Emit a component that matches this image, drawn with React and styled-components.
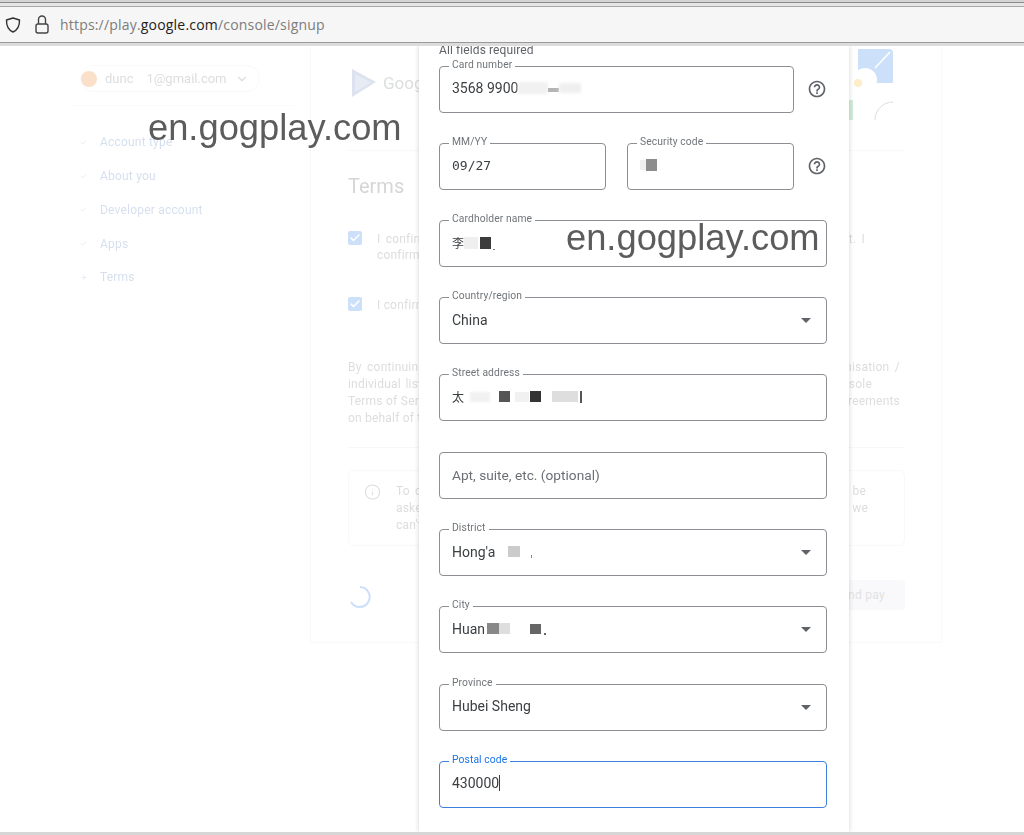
import styled, { createGlobalStyle } from "styled-components";
import { ArrowRight, Check, ChevronDown, Info } from "lucide-react";

const GlobalStyle = createGlobalStyle`
  html, body {
    margin: 0;
    height: 100%;
    background: #fff;
    font-family: Roboto, "Liberation Sans", sans-serif;
  }
  #root { height: 100%; }
`;

const Window = styled.div`
  width: 1024px;
  height: 835px;
  display: flex;
  flex-direction: column;
  overflow: hidden;
  position: relative;
`;

/* browser chrome */
const Chrome = styled.header`
  flex: none;
  height: 46px;
  box-sizing: border-box;
  background: #f6f6f6;
  border-top: 2px solid #d4d4d4;
  display: flex;
  flex-direction: column;
`;

const ChromeLine = styled.div`
  flex: none;
  height: ${(p) => p.$h}px;
  background: ${(p) => p.$c};
`;

const UrlBar = styled.div`
  flex: 1;
  display: flex;
  align-items: center;
  gap: 12px;
  padding-left: 4px;
`;

const UrlText = styled.div`
  font-family: "Open Sans", sans-serif;
  font-size: 14px;
  letter-spacing: 0.19px;
  color: #7c7c7c;
  margin-left: -2px;
  white-space: nowrap;
`;

const UrlHost = styled.span`
  color: #222;
`;

/* everything under the chrome */
const Stage = styled.main`
  flex: 1;
  position: relative;
  overflow: hidden;
  background: #fff;
`;

const Bottom = styled.div`
  flex: none;
  height: 3px;
  background: #d6d6d6;
`;

/* faded console page behind the dialog */
const Page = styled.div`
  display: grid;
  grid-template-columns: 310px 632px;
  opacity: 0.22;
  filter: blur(0.6px);
`;

const Sidebar = styled.aside`
  padding: 19px 15px 0 72px;
`;

const AccountPill = styled.div`
  width: 180px;
  height: 27px;
  margin-left: 8px;
  box-sizing: border-box;
  border: 1px solid #e4e4e4;
  border-radius: 14px;
  display: flex;
  align-items: center;
  gap: 8px;
  font-size: 13px;
  color: #5f6368;
`;

const Avatar = styled.div`
  width: 16px;
  height: 16px;
  border-radius: 50%;
  background: #e8710a;
`;

const SideRule = styled.div`
  height: 1px;
  background: #e8e8e8;
  margin: 13px 0 19.4px;
`;

const NavItem = styled.div`
  height: 33.75px;
  display: flex;
  align-items: center;
  gap: 13px;
  padding-left: 8px;
  font-size: 12px;
  letter-spacing: 0.2px;
  color: #3f6fb5;
`;

const ConsoleCard = styled.section`
  border: 1px solid #e4e4e4;
  border-top: 0;
  padding-bottom: 32px;
`;

const ConsoleHeader = styled.div`
  height: 105px;
  box-sizing: border-box;
  margin: 0 37px;
  padding-top: 23px;
  border-bottom: 1px solid #ddd;
  display: flex;
  align-items: flex-start;
  gap: 7px;
  position: relative;
  font-size: 17px;
  color: #5f6368;
  padding-left: 4px;
`;

const BrandName = styled.div`
  margin-top: 4px;
`;

const Illustration = styled.svg`
  position: absolute;
  right: 11px;
  top: 0;
`;

const ConsoleBody = styled.div`
  margin: 0 37px;
`;

const Heading = styled.h2`
  margin: 22px 0 0;
  font-size: 20px;
  line-height: 26px;
  font-weight: 400;
  color: #3c4043;
`;

const ConfirmRow = styled.div`
  display: flex;
  gap: 15px;
  margin-top: ${(p) => p.$top}px;
  font-size: 12px;
  line-height: 16px;
  letter-spacing: 0.2px;
  color: #5f6368;
`;

const Tick = styled.div`
  flex: none;
  width: 14px;
  height: 14px;
  background: #1a73e8;
  border-radius: 2px;
  display: flex;
  align-items: center;
  justify-content: center;
  color: #fff;
`;

const TextLine = styled.div`
  width: ${(p) => (p.$w ? `${p.$w}px` : "auto")};
  white-space: nowrap;
  text-align: justify;
  text-align-last: ${(p) => (p.$w ? "justify" : "left")};
`;

const Terms = styled.div`
  margin-top: 46px;
  font-size: 12px;
  line-height: 17px;
  letter-spacing: 0.2px;
  color: #5f6368;
`;

const Rule = styled.div`
  height: 1px;
  background: #ddd;
  margin: 20px 0 22px;
`;

const Notice = styled.div`
  width: 557px;
  height: 76px;
  box-sizing: border-box;
  border: 1px solid #dedede;
  border-radius: 6px;
  padding: 12px 0 0 15px;
  display: flex;
  gap: 15px;
  font-size: 12px;
  line-height: 17px;
  letter-spacing: 0.2px;
  color: #5f6368;
`;

const NoticeText = styled.div`
  flex: 1;
  padding-right: 36px;
`;

const ConsoleFooter = styled.div`
  width: 557px;
  margin-top: 34px;
  display: flex;
  align-items: center;
  justify-content: space-between;
`;

const SpinnerSlot = styled.div`
  display: flex;
  margin-top: 4px;
`;

const PayButton = styled.div`
  width: 210px;
  height: 30px;
  border-radius: 4px;
  background: #e3dde8;
  display: flex;
  align-items: center;
  justify-content: flex-end;
  font-size: 12px;
  letter-spacing: 0.3px;
  color: #777;
  padding-right: 20px;
  box-sizing: border-box;
  white-space: nowrap;
`;

/* payment dialog */
const Dialog = styled.div`
  position: absolute;
  left: 419px;
  top: 0;
  bottom: 0;
  width: 430px;
  box-sizing: border-box;
  padding: 0 22px 0 20px;
  background: #fff;
  box-shadow: 0 0 5px rgba(0, 0, 0, 0.18);
  filter: blur(0.4px);
`;

const Required = styled.div`
  margin-top: -3px;
  font-size: 12px;
  line-height: 14px;
  letter-spacing: 0.1px;
  color: #5f6368;
  margin-bottom: 8.65px;
`;

const Fields = styled.div`
  display: flex;
  flex-direction: column;
  gap: 30.2px;
`;

const Row = styled.div`
  display: flex;
  align-items: center;
  gap: ${(p) => p.$gap || 0}px;
`;

const HelpSlot = styled.div`
  flex: none;
  width: 33px;
  display: flex;
  justify-content: flex-end;
  color: #5f6368;
`;

const Box = styled.div`
  position: relative;
  flex: ${(p) => (p.$half ? "none" : "1 0 auto")};
  width: ${(p) => (p.$half ? "167px" : "auto")};
  height: 47px;
  box-sizing: border-box;
  margin-top: ${(p) => (p.$placeholder ? "0.5px" : 0)};
  border: 1px solid ${(p) => (p.$focus ? "#3f7fdc" : "#8b8e92")};
  border-radius: 4px;
  padding: 0 12px 2px;
  display: flex;
  align-items: center;
  font-size: ${(p) => (p.$placeholder ? "13.7px" : "14px")};
  color: ${(p) => (p.$placeholder ? "#6b6f74" : "#3c4043")};
`;

const Label = styled.span`
  position: absolute;
  left: 9px;
  top: -8px;
  padding: 0 3px;
  background: #fff;
  font-size: 10.3px;
  line-height: 12px;
  letter-spacing: 0.1px;
  white-space: nowrap;
  color: ${(p) => (p.$focus ? "#1a73e8" : "#70757a")};
`;

const Mono = styled.span`
  font-family: "DejaVu Sans Mono", monospace;
  font-size: 13px;
`;

const Han = styled.span`
  font-family: "Noto Sans CJK SC", sans-serif;
  font-size: 12px;
  margin-right: ${(p) => p.$gap || 0}px;
`;

const Smudge = styled.span`
  display: inline-block;
  flex: none;
  width: ${(p) => p.$w}px;
  height: ${(p) => p.$h || 12}px;
  margin-left: ${(p) => p.$left || 0}px;
  margin-top: ${(p) => p.$top || 0}px;
  background: ${(p) => p.$c};
  filter: blur(${(p) => p.$blur || 0.5}px);
`;

const Caret = styled.span`
  display: inline-block;
  width: 1px;
  height: 16px;
  background: #3c4043;
`;

const DropArrow = styled.span`
  position: absolute;
  right: 15px;
  top: 20px;
  width: 0;
  height: 0;
  border-left: 5px solid transparent;
  border-right: 5px solid transparent;
  border-top: 5px solid #5f6368;
`;

const Watermark = styled.div`
  position: absolute;
  left: ${(p) => p.$x}px;
  top: ${(p) => p.$y}px;
  font-family: "Liberation Sans", sans-serif;
  font-size: 36.3px;
  line-height: 42px;
  color: #5c5c5c;
  white-space: nowrap;
`;

const ShieldIcon = () => (
  <svg width="18" height="18" viewBox="0 0 18 18" fill="none" stroke="#333" strokeWidth="1.4">
    <path d="M9 2 L15.5 4 C15.7 9.5 13.5 14 9 16 C4.5 14 2.3 9.5 2.5 4 Z" strokeLinejoin="round" />
  </svg>
);

const LockIcon = () => (
  <svg width="16" height="19" viewBox="0 0 16 19" fill="none" stroke="#444" strokeWidth="1.4">
    <rect x="2" y="9" width="12" height="9" rx="2" />
    <path d="M4.5 9 V4.5 a3.5 3.5 0 0 1 7 0 V9" />
  </svg>
);

const HelpIcon = () => (
  <svg width="20" height="20" viewBox="0 0 24 24" fill="currentColor">
    <path d="M11 18h2v-2h-2v2zm1-16C6.48 2 2 6.48 2 12s4.48 10 10 10 10-4.48 10-10S17.52 2 12 2zm0 18c-4.41 0-8-3.59-8-8s3.59-8 8-8 8 3.59 8 8-3.59 8-8 8zm0-14c-2.21 0-4 1.79-4 4h2c0-1.1.9-2 2-2s2 .9 2 2c0 2-3 1.75-3 5h2c0-2.25 3-2.5 3-5 0-2.21-1.79-4-4-4z" />
  </svg>
);

const PlayLogo = () => (
  <svg width="24" height="28" viewBox="0 0 24 28">
    <path d="M0 0 L24 13 L0 28 Z" fill="#5f7fb0" />
    <path d="M3 5 L19 13.5 L3 23 Z" fill="#8ea6cc" />
  </svg>
);

const Spinner = () => (
  <svg width="24" height="24" viewBox="0 0 24 24" fill="none" stroke="#1a73e8" strokeWidth="2">
    <path d="M12 2 A10 10 0 1 1 3 17" />
  </svg>
);

const Field = ({ label, focus, half, placeholder, select, children }) => (
  <Box $focus={focus} $half={half} $placeholder={placeholder}>
    {label && <Label $focus={focus}>{label}</Label>}
    {children}
    {select && <DropArrow />}
  </Box>
);

const steps = ["Account type", "About you", "Developer account", "Apps"];

const App = () => (
  <Window>
    <GlobalStyle />
    <Chrome>
      <ChromeLine $h={1} $c="#8c8c8c" />
      <ChromeLine $h={3} $c="#e6e6e6" />
      <ChromeLine $h={1} $c="#a8a8a8" />
      <UrlBar>
        <ShieldIcon />
        <LockIcon />
        <UrlText>
          https://play.<UrlHost>google.com</UrlHost>/console/signup
        </UrlText>
      </UrlBar>
      <ChromeLine $h={1} $c="#9a9a9a" />
      <ChromeLine $h={3} $c="#dcdcdc" />
    </Chrome>
    <Stage>
      <Page>
        <Sidebar>
          <AccountPill>
            <Avatar />
            dunc&nbsp;&nbsp;&nbsp;&nbsp;1@gmail.com
            <ChevronDown size={14} />
          </AccountPill>
          <SideRule />
          {steps.map((step) => (
            <NavItem key={step}>
              <Check size={7} />
              {step}
            </NavItem>
          ))}
          <NavItem>
            <ArrowRight size={7} />
            Terms
          </NavItem>
        </Sidebar>
        <ConsoleCard>
          <ConsoleHeader>
            <PlayLogo />
            <BrandName>Google Play Console</BrandName>
            <Illustration width="60" height="75" viewBox="0 0 60 75">
              <path d="M25 3 H56 Q60 3 60 7 V37 H25 Z" fill="#1a73e8" />
              <circle cx="32" cy="34" r="12" fill="#fff" />
              <path d="M57 6 L42 22" stroke="#fff" strokeWidth="1.5" />
              <circle cx="25" cy="37" r="4" fill="#f9ab00" />
              <rect x="15" y="54" width="5" height="20" fill="#34a853" />
              <path d="M42 74 A18 18 0 0 1 60 56" fill="none" stroke="#5f6368" strokeWidth="1" />
            </Illustration>
          </ConsoleHeader>
          <ConsoleBody>
            <Heading>Terms</Heading>
            <ConfirmRow $top={32}>
              <Tick>
                <Check size={12} strokeWidth={3} />
              </Tick>
              <div>
                <TextLine $w={488}>I confirm that I have read and agree to Google Play Console Developer Agreement. I</TextLine>
                <TextLine>confirm that I am authorised to accept it.</TextLine>
              </div>
            </ConfirmRow>
            <ConfirmRow $top={34}>
              <Tick>
                <Check size={12} strokeWidth={3} />
              </Tick>
              <TextLine>I confirm that the information provided is correct.</TextLine>
            </ConfirmRow>
            <Terms>
              <TextLine $w={552}>By continuing to create an account, you agree this account will be bound to the organisation /</TextLine>
              <TextLine $w={524}>individual listed on this account, and you accept the Developer Agreement and Play Console</TextLine>
              <TextLine $w={552}>Terms of Service, along with any of the related developer programme policies and other agreements</TextLine>
              <TextLine>on behalf of the organisation.</TextLine>
            </Terms>
            <Rule />
            <Notice>
              <Info size={18} strokeWidth={1.5} />
              <NoticeText>
                <TextLine $w={470}>To complete your registration and start publishing apps on Play, you will soon be</TextLine>
                <TextLine $w={472}>asked to pay a one-time registration fee of 25 US dollars by card, after which we</TextLine>
                <TextLine>can't refund this payment.</TextLine>
              </NoticeText>
            </Notice>
            <ConsoleFooter>
              <SpinnerSlot>
                <Spinner />
              </SpinnerSlot>
              <PayButton>Create account and pay</PayButton>
            </ConsoleFooter>
          </ConsoleBody>
        </ConsoleCard>
      </Page>
      <Dialog>
        <Required>All fields required</Required>
        <Fields>
          <Row>
            <Field label="Card number">
              3568 9900
              <Smudge $w={30} $h={12} $c="#f1f1f1" $blur={1.5} />
              <Smudge $w={11} $h={4} $c="#b5b5b5" $top={4} />
              <Smudge $w={22} $h={10} $c="#efefef" $blur={1.5} />
            </Field>
            <HelpSlot>
              <HelpIcon />
            </HelpSlot>
          </Row>
          <Row $gap={21}>
            <Field label="MM/YY" half>
              <Mono>09/27</Mono>
            </Field>
            <Row>
              <Field label="Security code" half>
                <Smudge $w={6} $h={10} $c="#efefef" />
                <Smudge $w={11} $h={12} $c="#8d8d8d" />
              </Field>
              <HelpSlot>
                <HelpIcon />
              </HelpSlot>
            </Row>
          </Row>
          <Field label="Cardholder name">
            <Han>李</Han>
            <Smudge $w={14} $h={12} $c="#efefef" />
            <Smudge $w={11} $h={12} $c="#3c3c3c" $left={2} />
            <Smudge $w={2} $h={1} $c="#777" $left={2} $top={14} />
          </Field>
          <Field label="Country/region" select>
            China
          </Field>
          <Field label="Street address">
            <Han $gap={6}>太</Han>
            <Smudge $w={20} $h={10} $c="#f1f1f1" $blur={1} />
            <Smudge $w={11} $h={11} $c="#555" $left={9} />
            <Smudge $w={14} $h={10} $c="#f1f1f1" $left={5} />
            <Smudge $w={11} $h={11} $c="#333" $left={1} />
            <Smudge $w={26} $h={11} $c="#dedede" $left={11} />
            <Smudge $w={2} $h={12} $c="#555" $left={2} />
          </Field>
          <Field placeholder>Apt, suite, etc. (optional)</Field>
          <Field label="District" select>
            Hong'a
            <Smudge $w={12} $h={11} $c="#cbcbcb" $left={13} />
            <Smudge $w={1} $h={3} $c="#888" $left={11} $top={10} />
          </Field>
          <Field label="City" select>
            Huan
            <Smudge $w={12} $h={11} $c="#888" $left={2} />
            <Smudge $w={11} $h={11} $c="#dedede" />
            <Smudge $w={11} $h={10} $c="#666" $left={20} />
            <Smudge $w={2} $h={2} $c="#666" $left={3} $top={10} />
          </Field>
          <Field label="Province" select>
            Hubei Sheng
          </Field>
          <Field label="Postal code" focus>
            430000
            <Caret />
          </Field>
        </Fields>
      </Dialog>
    </Stage>
    <Bottom />
    <Watermark $x={148} $y={107}>en.gogplay.com</Watermark>
    <Watermark $x={566} $y={217}>en.gogplay.com</Watermark>
  </Window>
);

export default App;
